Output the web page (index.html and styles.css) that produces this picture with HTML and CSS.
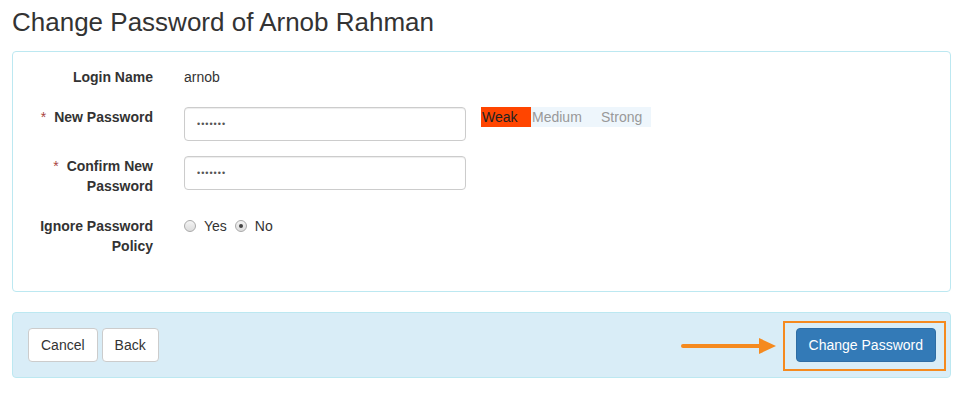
FILE: index.html
```html
<!DOCTYPE html>
<html lang="en">
<head>
    <meta charset="UTF-8">
    <title>Change Password</title>
    <link rel="stylesheet" href="styles.css">
</head>
<body>
    <h1 class="page-title">Change Password of Arnob Rahman</h1>

    <div class="panel">
        <div class="form-row">
            <div class="form-label">Login Name</div>
            <div class="form-static">arnob</div>
        </div>
        <div class="form-row">
            <div class="form-label"><span class="req">*</span>New Password</div>
            <input class="form-control" type="password" value="1234567">
            <div class="strength">
                <span class="seg seg-weak">Weak</span>
                <span class="seg seg-medium">Medium</span>
                <span class="seg seg-strong">Strong</span>
            </div>
        </div>
        <div class="form-row">
            <div class="form-label"><span class="req">*</span>Confirm New Password</div>
            <input class="form-control" type="password" value="1234567">
        </div>
        <div class="form-row">
            <div class="form-label">Ignore Password Policy</div>
            <div class="radios">
                <label class="radio"><input type="radio" name="ignore"> Yes</label>
                <label class="radio"><input type="radio" name="ignore" checked> No</label>
            </div>
        </div>
    </div>

    <div class="panel-footer">
        <div class="btn-group">
            <button class="btn">Cancel</button>
            <button class="btn">Back</button>
        </div>
        <div class="submit-area">
            <svg class="arrow" width="96" height="20" viewBox="0 0 96 20">
                <line x1="2" y1="10" x2="80" y2="10" stroke="#f58a1f" stroke-width="4" stroke-linecap="round"/>
                <polygon points="78,2 95,10 78,18" fill="#f58a1f"/>
            </svg>
            <div class="highlight">
                <button class="btn btn-primary">Change Password</button>
            </div>
        </div>
    </div>
</body>
</html>
```

FILE: styles.css
```css
body {
    margin: 0;
    padding: 0 10px 0 12px;
    font-family: "Liberation Sans", Arial, sans-serif;
    font-size: 14px;
    line-height: 20px;
    color: #333;
    background-color: #fff;
}

.page-title {
    margin: 8px 0 14px;
    font-size: 26px;
    font-weight: normal;
    line-height: 29px;
    color: #333;
}

.panel {
    border: 1px solid #bce8f1;
    border-radius: 4px;
    padding: 15px 15px 35px;
    margin-bottom: 20px;
}

.form-row {
    display: flex;
    align-items: flex-start;
    margin-bottom: 20px;
}

.form-row:nth-child(2) {
    margin-bottom: 15px;
}

.form-row:last-child {
    margin-bottom: 0;
}

.form-label {
    width: 125px;
    margin-right: 31px;
    text-align: right;
    font-weight: bold;
}

.req {
    color: #a94442;
    font-weight: normal;
    margin-right: 8px;
}

.form-static {
    color: #333;
}

.form-control {
    width: 282px;
    height: 34px;
    box-sizing: border-box;
    padding: 6px 12px;
    border: 1px solid #ccc;
    border-radius: 4px;
    font-family: "Liberation Sans", Arial, sans-serif;
    font-size: 9px;
    letter-spacing: 1px;
    color: #555;
    box-shadow: inset 0 1px 1px rgba(0, 0, 0, 0.075);
}

.strength {
    display: flex;
    margin-left: 15px;
    background-color: #eef6fc;
    height: 20px;
}

.seg {
    color: #999;
    line-height: 20px;
}

.seg-weak {
    width: 50px;
    padding-left: 1px;
    box-sizing: border-box;
    background-color: #ff4500;
    color: #222;
}

.seg-medium {
    width: 70px;
    padding-left: 1px;
    box-sizing: border-box;
}

.seg-strong {
    width: 50px;
}

.radios {
    display: flex;
    gap: 8px;
}

.radio {
    display: flex;
    align-items: center;
    gap: 8px;
}

.radio input {
    appearance: none;
    -webkit-appearance: none;
    width: 12px;
    height: 12px;
    margin: 0;
    border: 1px solid #aaa;
    border-radius: 50%;
    background: linear-gradient(#f4f4f4, #dcdcdc);
    box-sizing: border-box;
    position: relative;
}

.radio input:checked::after {
    content: "";
    position: absolute;
    left: 3px;
    top: 3px;
    width: 4px;
    height: 4px;
    border-radius: 50%;
    background-color: #444;
}

.panel-footer {
    display: flex;
    justify-content: space-between;
    align-items: center;
    padding: 15px 14px 15px 15px;
    background-color: #d9edf7;
    border: 1px solid #bce8f1;
    border-radius: 4px;
}

.btn-group {
    display: flex;
    gap: 4px;
}

.btn {
    display: inline-block;
    height: 34px;
    padding: 6px 12px;
    font-family: "Liberation Sans", Arial, sans-serif;
    font-size: 14px;
    line-height: 20px;
    color: #333;
    background-color: #fff;
    border: 1px solid #ccc;
    border-radius: 4px;
    box-sizing: border-box;
}

.btn-primary {
    padding: 6px 12px;
    color: #fff;
    background-color: #337ab7;
    border-color: #2e6da4;
}

.submit-area {
    display: flex;
    align-items: center;
}

.arrow {
    margin-right: 19px;
    margin-top: 1px;
}

.highlight {
    position: relative;
}

.highlight::before {
    content: "";
    position: absolute;
    top: -7px;
    left: -13px;
    right: -10px;
    bottom: -9px;
    border: 2px solid #f58a1f;
}
```
